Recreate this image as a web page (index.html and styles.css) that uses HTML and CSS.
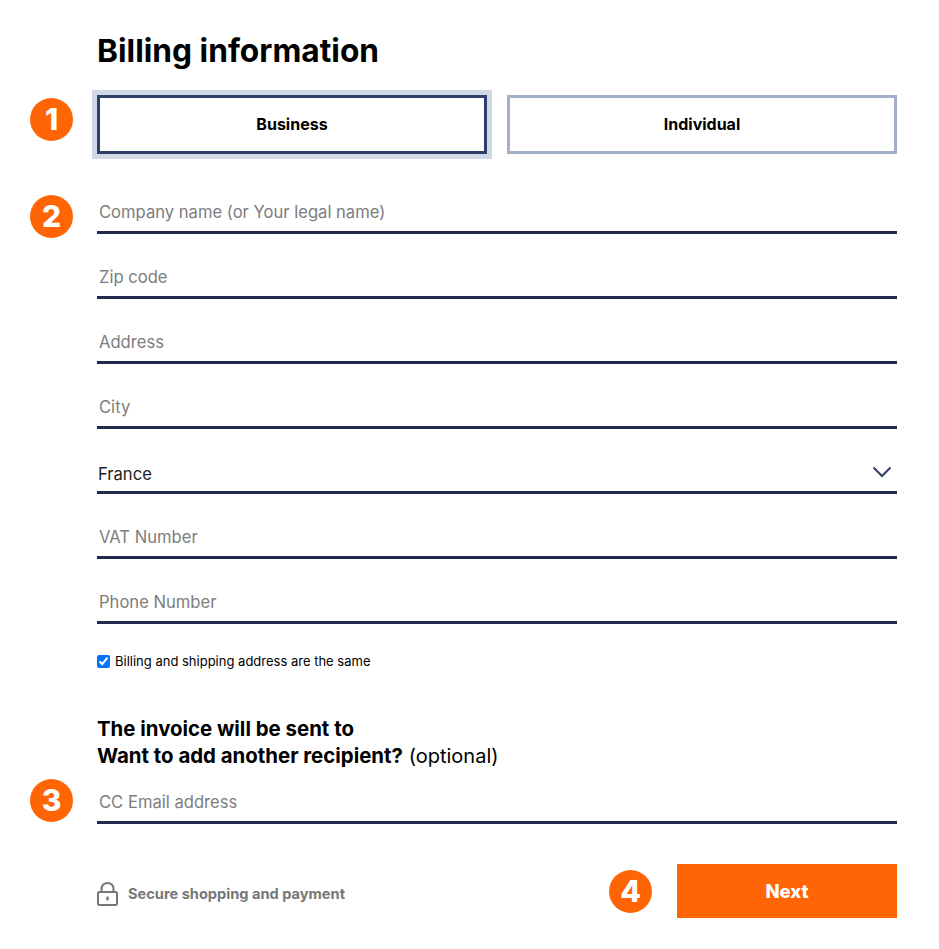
FILE: index.html
```html
<!DOCTYPE html>
<html lang="en">
<head>
<meta charset="UTF-8" />
<meta name="viewport" content="width=device-width, initial-scale=1" />
<title>Billing information</title>
<link rel="stylesheet" href="styles.css">
</head>
<body>

<main class="checkout">
  <h1>Billing information</h1>

  <div class="step step-type">
    <span class="badge">1</span>
    <div class="tabs">
      <button type="button" class="tab tab-active">Business</button>
      <button type="button" class="tab">Individual</button>
    </div>
  </div>

  <form>
    <div class="step step-address">
      <span class="badge">2</span>
      <div class="fields">
        <div class="field"><input type="text" placeholder="Company name (or Your legal name)" /></div>
        <div class="field"><input type="text" placeholder="Zip code" /></div>
        <div class="field"><input type="text" placeholder="Address" /></div>
        <div class="field"><input type="text" placeholder="City" /></div>
        <div class="field field-select">
          <select>
            <option>France</option>
          </select>
          <svg class="chevron" width="20" height="12" viewBox="0 0 20 12" aria-hidden="true">
            <path d="M1.5 1.5 L10 10 L18.5 1.5" fill="none" stroke="#2f3d6b" stroke-width="2" />
          </svg>
        </div>
        <div class="field"><input type="text" placeholder="VAT Number" /></div>
        <div class="field"><input type="text" placeholder="Phone Number" /></div>
      </div>
    </div>

    <label class="same-address">
      <input type="checkbox" checked />
      <span>Billing and shipping address are the same</span>
    </label>

    <div class="recipient">
      <strong>The invoice will be sent to</strong><br>
      <strong>Want to add another recipient?</strong> <span class="optional">(optional)</span>
    </div>

    <div class="step step-cc">
      <span class="badge">3</span>
      <div class="field"><input type="email" placeholder="CC Email address" /></div>
    </div>

    <div class="actions">
      <div class="secure">
        <svg width="21" height="24" viewBox="0 0 21 24" aria-hidden="true">
          <path d="M4.5 10 V6.5 a6 5.5 0 0 1 12 0 V10" fill="none" stroke="#777" stroke-width="2" />
          <rect x="1" y="10" width="19" height="13" rx="1.5" fill="none" stroke="#777" stroke-width="2" />
          <rect x="9.25" y="14.5" width="2.5" height="4" rx="1" fill="#777" />
        </svg>
        <span>Secure shopping and payment</span>
      </div>
      <div class="next-wrap">
        <span class="badge">4</span>
        <button type="submit" class="btn-next">Next</button>
      </div>
    </div>
  </form>
</main>

</body>
</html>
```

FILE: styles.css
```css
* {
  box-sizing: border-box;
  margin: 0;
  padding: 0;
  font-family: Inter, 'Open Sans', sans-serif;
}

body {
  background: #fff;
  color: #000;
}

.checkout {
  width: 897px;
  padding: 30px 0 0 30px;
}

h1 {
  margin-left: 67px;
  font-size: 31.7px;
  line-height: 42px;
  font-weight: 700;
}

.step {
  display: grid;
  grid-template-columns: 43px 800px;
  column-gap: 24px;
}

.badge {
  width: 43px;
  height: 43px;
  border-radius: 50%;
  background: #ff6405;
  color: #fff;
  font-size: 30px;
  font-weight: 800;
  line-height: 43px;
  text-align: center;
}

.step-type {
  margin-top: 23px;
}

.step-type .badge {
  margin-top: 3px;
}

.tabs {
  display: grid;
  grid-template-columns: 1fr 1fr;
  column-gap: 20px;
}

.tab {
  height: 59px;
  padding-bottom: 2px;
  background: #fff;
  border: 3px solid #a4afc9;
  font-size: 16px;
  font-weight: 700;
  color: #000;
}

.tab-active {
  border-color: #2f3d6b;
  box-shadow: 0 0 0 5px #d0d8e6;
}

.step-address {
  margin-top: 40px;
}

.step-address .badge {
  margin-top: 1px;
}

.fields {
  display: flex;
  flex-direction: column;
  gap: 25px;
}

.field {
  position: relative;
  height: 40px;
  border-bottom: 3px solid #21294d;
}

.field input,
.field select {
  width: 100%;
  height: 37px;
  border: none;
  outline: none;
  background: transparent;
  font-size: 16.6px;
  color: #222;
  padding: 0 2px 2px;
  appearance: none;
}

.field input::placeholder {
  color: #7d7d7d;
  opacity: 1;
}

.field select {
  padding: 3px 1px 0;
}

.chevron {
  position: absolute;
  right: 5px;
  top: 12px;
}

.same-address {
  display: flex;
  align-items: center;
  gap: 5px;
  margin: 31px 0 0 67px;
  font-size: 13px;
  line-height: 13px;
}

.same-address input {
  width: 13px;
  height: 13px;
}

.recipient {
  margin: 47px 0 0 67px;
  font-size: 20.4px;
  line-height: 27px;
}

.recipient strong {
  font-weight: 700;
}

.optional {
  font-size: 20px;
}

.step-cc {
  margin-top: 9px;
}

.step-cc .field {
  margin-top: 5px;
}

.actions {
  display: flex;
  align-items: center;
  justify-content: space-between;
  margin: 40px 0 0 67px;
  width: 800px;
}

.secure {
  display: flex;
  align-items: center;
  gap: 10px;
  margin-top: 5px;
  font-size: 14.6px;
  font-weight: 700;
  color: #777;
}

.next-wrap {
  display: flex;
  align-items: center;
  gap: 25px;
}

.btn-next {
  width: 220px;
  height: 54px;
  border: none;
  background: #ff6405;
  color: #fff;
  font-size: 18.5px;
  font-weight: 800;
}
```
